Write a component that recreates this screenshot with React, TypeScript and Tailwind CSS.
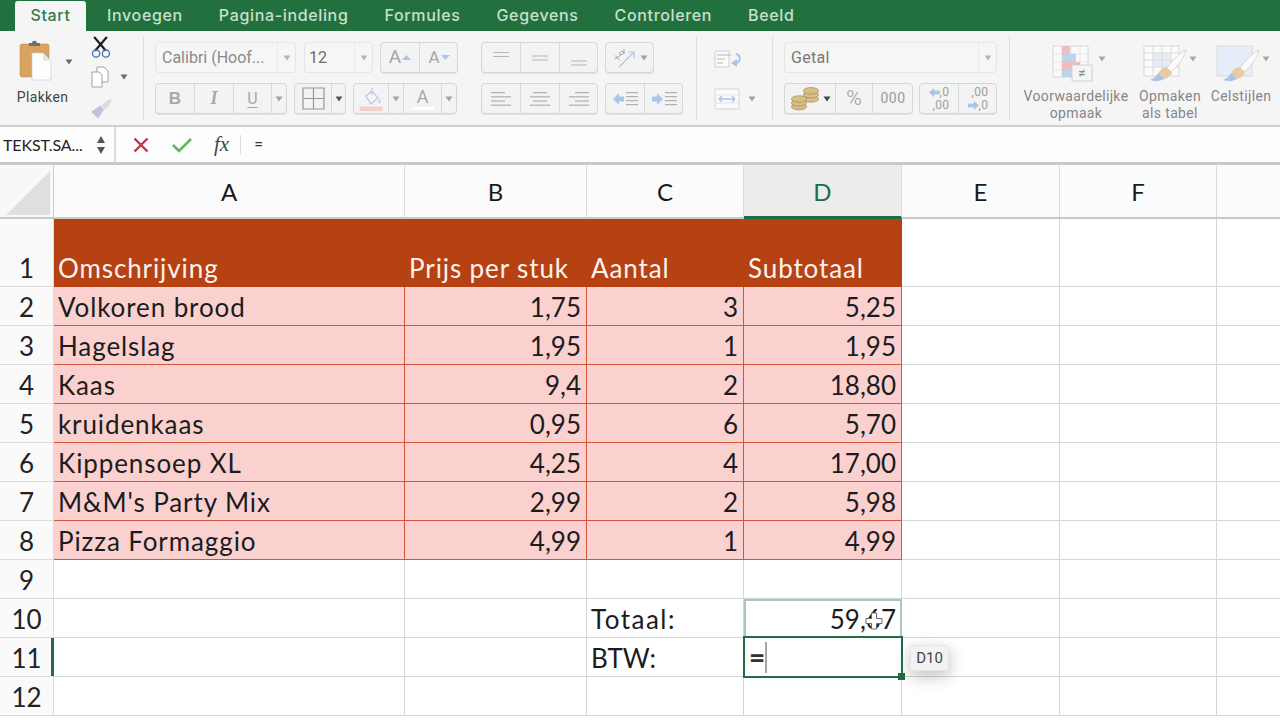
import React from "react";

const ui = "font-['Roboto','Liberation_Sans',sans-serif]";
const sheet = "font-['Lato','Carlito',sans-serif]";

function Caret({ className = "", color = "#a3a3a3" }: { className?: string; color?: string }) {
  return (
    <svg width="8" height="6" viewBox="0 0 8 6" className={className}>
      <path d="M0.5 0.5h7L4 5.5z" fill={color} />
    </svg>
  );
}

function Btn({ w, children, className = "" }: { w: string; children?: React.ReactNode; className?: string }) {
  return <div className={`flex h-full shrink-0 items-center justify-center border-r border-[#d9d9d9] last:border-r-0 ${w} ${className}`}>{children}</div>;
}

function Box({ w, children, className = "" }: { w: string; children: React.ReactNode; className?: string }) {
  return <div className={`flex h-[31px] shrink-0 items-center rounded-[4px] border border-[#d6d6d6] bg-[#f3f3f3] shadow-[0_1px_0_#e2e2e2] ${w} ${className}`}>{children}</div>;
}

function Select({ w, text, color, extra = "" }: { w: string; text: string; color: string; extra?: string }) {
  return (
    <div className={`flex h-[31px] shrink-0 items-center rounded-[4px] border border-[#e6e6e6] bg-[#f6f6f6] pl-[6px] ${w}`}>
      <span className={`flex-1 text-[16px] text-[#777] ${extra}`} style={{ color }}>{text}</span>
      <div className="flex h-full w-[18px] items-center justify-center border-l border-[#ececec]">
        <Caret color="#b5b5b5" />
      </div>
    </div>
  );
}

function Lines({ kind }: { kind: "l" | "c" | "r" }) {
  const rows: [number, number][] =
    kind === "l" ? [[0, 14], [0, 20], [0, 14], [0, 20]] : kind === "c" ? [[3, 14], [0, 20], [3, 14], [0, 20]] : [[6, 14], [0, 20], [6, 14], [0, 20]];
  return (
    <svg width="20" height="16" viewBox="0 0 20 16">
      {rows.map(([x, w], i) => (
        <rect key={i} x={x} y={1 + i * 4.2} width={w} height="1.2" fill="#b0b0b0" />
      ))}
    </svg>
  );
}

function Indent({ right }: { right?: boolean }) {
  return (
    <svg width="26" height="16" viewBox="0 0 26 16">
      {right ? <path d="M1 5.500h5V2l6 6-6 6v-3.500H1z" fill="#a9c6ea" /> : <path d="M12 5.500H7V2L1 8l6 6v-3.500h5z" fill="#a9c6ea" />}
      {[1, 5, 9, 13].map((y) => (
        <rect key={y} x="14" y={y} width="12" height="1.200" fill="#b0b0b0" />
      ))}
    </svg>
  );
}

function Brush() {
  return (
    <g>
      <path d="M43 5C36 8 30 15 24 23l4 4C35 21 41 13 43 5z" fill="#fbfbfb" stroke="#cdcdcd" strokeWidth="0.800" />
      <path d="M23 22c-4 1-7 4-8 7l6 5c4-1 7-4 8-7z" fill="#e6cba3" />
      <path d="M15 28c-1 3-4 5-8 7 5 2 11 1 14-1z" fill="#a9c4ea" />
    </g>
  );
}

function TableGrid({ fill }: { fill?: boolean }) {
  return (
    <g stroke="#dadada" strokeWidth="1" fill="none">
      <rect x="1" y="1" width="35" height="30" fill={fill ? "#e7edf8" : "#fbfbfb"} />
      {!fill && <rect x="10" y="8" width="18" height="14" fill="#e7edf8" stroke="none" />}
      {!fill && <path d="M1 8h35M1 15h35M1 22h35M10 1v30M19 1v30M28 1v30" />}
    </g>
  );
}

function Separator() {
  return <div className="h-[84px] w-px shrink-0 self-start bg-[#dfdfdf]" />;
}

function Ribbon() {
  return (
    <div className={`flex h-[96px] shrink-0 items-start border-b-2 border-[#cfcfcf] bg-[#f5f5f5] pt-[5px] ${ui}`}>
      {/* Clipboard */}
      <div className="flex h-[84px] w-[143px] shrink-0">
        <div className="ml-4 flex w-[53px] flex-col items-center">
          <svg width="34" height="42" viewBox="0 0 34 42" className="ml-[-14px] mt-[4px]">
            <rect x="1" y="4" width="29" height="33" rx="2" fill="#d9a25f" stroke="#b98a4e" strokeWidth="0.500" />
            <path d="M10 6V3h3c0-3 5-3 5 0h3v3z" fill="#6f6f6f" />
            <path d="M13 13h11l8 8v19H13z" fill="#fdfdfd" stroke="#cfcfcf" strokeWidth="0.700" />
            <path d="M24 13v8h8z" fill="#e6e6e6" />
          </svg>
          <span className="mt-[5px] text-[14px] leading-5 tracking-[0.35px] text-[#444]">Plakken</span>
        </div>
        <Caret color="#6b6b6b" className="ml-[-4px] mt-[23px]" />
        <div className="ml-[17px] flex w-[40px] flex-col">
          <svg width="22" height="24" viewBox="0 0 22 24" className="mt-0">
            <path d="M4 1l12 14M17 1L5 15" stroke="#1c1c1c" strokeWidth="2.200" />
            <circle cx="6" cy="18" r="3.700" fill="none" stroke="#3f72b5" strokeWidth="1.300" />
            <circle cx="16" cy="18" r="3.700" fill="none" stroke="#3f72b5" strokeWidth="1.300" />
          </svg>
          <div className="mt-[7px] flex items-center">
            <svg width="20" height="22" viewBox="0 0 20 22">
              <path d="M7 1h7l4 4v11H7z" fill="#fff" stroke="#9a9a9a" strokeWidth="0.900" />
              <path d="M2 6h7l3 3v12H2z" fill="#fff" stroke="#9a9a9a" strokeWidth="0.900" />
            </svg>
            <Caret color="#6b6b6b" className="ml-[10px]" />
          </div>
          <svg width="24" height="22" viewBox="0 0 24 22" className="mt-[10px]">
            <path d="M22 1c-3 0-8 4-11 7l4 4c3-3 7-7 7-11z" fill="#dcdcdc" />
            <path d="M10 8L1 14l7 7 6-9z" fill="#b9c4d4" />
          </svg>
        </div>
      </div>
      <Separator />
      {/* Font */}
      <div className="ml-[11px] flex w-[303px] shrink-0 flex-col gap-[10px] pt-[6px]">
        <div className="flex gap-[8px]">
          <Select w="w-[141px]" text="Calibri (Hoof..." color="#8a8a8a" />
          <Select w="w-[69px]" text="12" color="#6e6e6e" extra="ml-[-2px]" />
          <Box w="w-[78px]" className="ml-[-1px]">
            <Btn w="w-[39px]" className="gap-[1px]">
              <span className="text-[19px] text-[#a6a6a6]">A</span>
              <svg width="9" height="5" viewBox="0 0 9 5"><path d="M0 5h9L4.500 0z" fill="#a9c6ea" /></svg>
            </Btn>
            <Btn w="w-[38px]" className="gap-[1px]">
              <span className="text-[17px] text-[#a6a6a6]">A</span>
              <svg width="9" height="5" viewBox="0 0 9 5"><path d="M0 0h9L4.500 5z" fill="#a9c6ea" /></svg>
            </Btn>
          </Box>
        </div>
        <div className="flex gap-[7px]">
          <Box w="w-[132px]">
            <Btn w="w-[39px]"><span className="font-['Liberation_Sans',sans-serif] text-[17px] font-bold text-[#a8a8a8]">B</span></Btn>
            <Btn w="w-[39px]"><span className="font-['Liberation_Serif',serif] text-[18px] italic font-bold text-[#a8a8a8]">I</span></Btn>
            <Btn w="w-[38px]"><span className="text-[16px] underline underline-offset-[3px] text-[#a8a8a8]">U</span></Btn>
            <Btn w="w-[14px]"><Caret /></Btn>
          </Box>
          <Box w="w-[52px]">
            <Btn w="w-[37px]">
              <svg width="23" height="23" viewBox="0 0 23 23"><path d="M1 1h21v21H1zM11.500 1v21M1 11.500h21" fill="none" stroke="#979797" strokeWidth="1.200" /></svg>
            </Btn>
            <Btn w="w-[14px]"><Caret color="#555" /></Btn>
          </Box>
          <Box w="w-[104px]">
            <Btn w="w-[35px]">
              <svg width="24" height="24" viewBox="0 0 24 24">
                <path d="M7 9l6-5 6 7-7 6z" fill="#f6f6f6" stroke="#b0c4dc" strokeWidth="1.100" />
                <path d="M13 1v7" stroke="#b0c4dc" />
                <path d="M20 12c1 2 2 3 1 4s-2-1-1-4z" fill="#b0c4dc" />
                <rect x="1" y="20" width="22" height="4" fill="#f8cfcc" stroke="#eebcb8" strokeWidth="0.500" />
              </svg>
            </Btn>
            <Btn w="w-[15px]"><Caret /></Btn>
            <Btn w="w-[38px]" className="flex-col">
              <span className="text-[18px] leading-[19px] text-[#a8a8a8]">A</span>
              <div className="mt-[1px] h-[3px] w-[22px] bg-white" />
            </Btn>
            <Btn w="w-[14px]"><Caret /></Btn>
          </Box>
        </div>
      </div>
      {/* Alignment */}
      <div className="ml-[23px] flex w-[215px] shrink-0 flex-col gap-[10px] pt-[6px]">
        <div className="flex gap-[7px]">
          <Box w="w-[117px]">
            <Btn w="w-[39px]"><svg width="16" height="16" viewBox="0 0 16 16"><path d="M0 2.500h16M0 6.500h16" stroke="#b5b5b5" strokeWidth="1.100" /></svg></Btn>
            <Btn w="w-[39px]"><svg width="16" height="16" viewBox="0 0 16 16"><path d="M0 6h16M0 10h16" stroke="#b5b5b5" strokeWidth="1.100" /></svg></Btn>
            <Btn w="w-[38px]"><svg width="16" height="16" viewBox="0 0 16 16"><path d="M0 11h16M0 15h16" stroke="#b5b5b5" strokeWidth="1.100" /></svg></Btn>
          </Box>
          <Box w="w-[49px]" className="justify-center gap-[3px]">
            <svg width="26" height="24" viewBox="0 0 26 24">
              <path d="M9.500 6.500c1.500-1.500 3.500-1.500 3.500 0s-3 3-4 2-.5-2 .5-2zM13 3l0 5" fill="none" stroke="#a0a0a0" strokeWidth="1" />
              <path d="M3.500 13l6-3.500M4 9.500l5 5" fill="none" stroke="#a0a0a0" strokeWidth="1" />
              <path d="M8 21L22 7M17 6h6v6" fill="none" stroke="#a9c6ea" strokeWidth="1.200" />
            </svg>
            <Caret />
          </Box>
        </div>
        <div className="flex gap-[7px]">
          <Box w="w-[117px]">
            <Btn w="w-[39px]"><Lines kind="l" /></Btn>
            <Btn w="w-[39px]"><Lines kind="c" /></Btn>
            <Btn w="w-[38px]"><Lines kind="r" /></Btn>
          </Box>
          <Box w="w-[78px]">
            <Btn w="w-[39px]"><Indent /></Btn>
            <Btn w="w-[38px]"><Indent right /></Btn>
          </Box>
        </div>
      </div>
      <Separator />
      {/* Wrap / merge */}
      <div className="ml-[17px] flex w-[58px] shrink-0 flex-col pt-[14px]">
        <svg width="28" height="18" viewBox="0 0 28 18">
          <path d="M1 1h14v16H1z" fill="#fafafa" stroke="#cfcfcf" />
          <path d="M3 5h14M3 9h8M3 13h6" stroke="#b8b8b8" />
          <path d="M22 4c5 1 5 8 0 9" fill="none" stroke="#a9c6ea" strokeWidth="2" />
          <path d="M23 9v8l-6-4z" fill="#a9c6ea" />
        </svg>
        <div className="mt-[20px] flex items-center">
          <svg width="26" height="22" viewBox="0 0 26 22">
            <path d="M1 1h24v20H1z" fill="#fafafa" stroke="#d5d5d5" />
            <path d="M1 7h24M1 15h24" stroke="#e4e4e4" />
            <path d="M5 11h16M5 11l3-3M5 11l3 3M21 11l-3-3M21 11l-3 3" stroke="#a9c6ea" strokeWidth="1.400" fill="none" />
          </svg>
          <Caret className="ml-[8px]" />
        </div>
      </div>
      <Separator />
      {/* Number */}
      <div className="ml-[11px] flex w-[225px] shrink-0 flex-col gap-[10px] pt-[6px]">
        <Select w="w-[213px]" text="Getal" color="#777777" extra="tracking-[0.3px]" />
        <div className="flex gap-[6px]">
          <Box w="w-[129px]">
            <Btn w="w-[51px]" className="gap-[3px]">
              <svg width="30" height="24" viewBox="0 0 27 22">
                <g fill="#d9bf83" stroke="#8d7a4c" strokeWidth="0.500">
                  <ellipse cx="19" cy="11" rx="7" ry="3" /><ellipse cx="19" cy="7" rx="7" ry="3" /><ellipse cx="19" cy="3.500" rx="7" ry="3" />
                  <ellipse cx="8" cy="18" rx="7" ry="3" /><ellipse cx="8" cy="14.500" rx="7" ry="3" /><ellipse cx="8" cy="11" rx="7" ry="3" />
                </g>
              </svg>
              <Caret color="#444" />
            </Btn>
            <Btn w="w-[37px]"><span className="text-[21px] font-light text-[#9a9a9a]">%</span></Btn>
            <Btn w="w-[40px]"><span className="text-[14px] tracking-[0.4px] text-[#9a9a9a]">000</span></Btn>
          </Box>
          <Box w="w-[78px]">
            <Btn w="w-[39px]">
              <div className="flex flex-col items-end text-[12px] leading-[13px] tracking-[0.4px] text-[#a0a0a0]">
                <span className="flex items-center"><svg width="11" height="9" viewBox="0 0 11 9"><path d="M0 4.500L5 0v2.500h6v4H5V9z" fill="#a9c6ea" /></svg>,0</span>
                <span>,00</span>
              </div>
            </Btn>
            <Btn w="w-[38px]">
              <div className="flex flex-col items-end text-[12px] leading-[13px] tracking-[0.4px] text-[#a0a0a0]">
                <span>,00</span>
                <span className="flex items-center"><svg width="11" height="9" viewBox="0 0 11 9"><path d="M11 4.500L6 0v2.500H0v4h6V9z" fill="#a9c6ea" /></svg>,0</span>
              </div>
            </Btn>
          </Box>
        </div>
      </div>
      <Separator />
      {/* Styles */}
      <div className="flex shrink-0 text-center text-[14px] leading-[16.500px] tracking-[0.35px] text-[#868686]">
        <div className="ml-[12px] flex w-[108px] flex-col items-center">
          <div className="flex h-[52px] items-start pt-[9px]">
            <svg width="42" height="37" viewBox="0 0 42 37" className="ml-[6px]">
              <path d="M1 1h35v31H1z" fill="#fafafa" stroke="#d8d8d8" />
              <path d="M1 9h35M1 17h35M1 25h35M10 1v31M19 1v31M28 1v31" stroke="#e3e3e3" />
              <rect x="10" y="1" width="8" height="8" fill="#f0bcc0" />
              <rect x="10" y="9" width="14" height="8" fill="#bcd3ec" />
              <rect x="10" y="17" width="18" height="8" fill="#f0bcc0" />
              <rect x="10" y="25" width="10" height="7" fill="#bcd3ec" />
              <rect x="20" y="20" width="20" height="16" fill="#f5f5f5" stroke="#cfcfcf" />
              <text x="30" y="33" fontSize="14" textAnchor="middle" fill="#8a8a8a" fontFamily="Roboto">≠</text>
            </svg>
            <Caret className="ml-[4px] mt-[11px]" color="#a8a8a8" />
          </div>
          <span>Voorwaardelijke<br />opmaak</span>
        </div>
        <div className="ml-[7px] flex w-[66px] flex-col items-center">
          <div className="flex h-[52px] items-start pt-[9px]">
            <svg width="44" height="37" viewBox="0 0 44 37"><TableGrid /><Brush /></svg>
            <Caret className="ml-[2px] mt-[11px]" color="#a8a8a8" />
          </div>
          <span>Opmaken<br />als tabel</span>
        </div>
        <div className="ml-[6px] flex w-[64px] flex-col items-center">
          <div className="flex h-[52px] items-start pt-[9px]">
            <svg width="44" height="37" viewBox="0 0 44 37" className="ml-[4px]"><TableGrid fill /><Brush /></svg>
            <Caret className="ml-[2px] mt-[11px]" color="#a8a8a8" />
          </div>
          <span>Celstijlen</span>
        </div>
      </div>
    </div>
  );
}

function FormulaBar() {
  return (
    <div className="flex h-[38px] shrink-0 items-center border-b-[3px] border-[#c9c9c9] bg-[#fdfdfd]">
      <div className="flex h-full w-[116px] shrink-0 items-center border-r-2 border-[#dcdcdc] pl-[3px]">
        <span className={`text-[16px] tracking-[-0.1px] text-[#222] ${sheet}`}>TEKST.SA...</span>
        <svg width="10" height="20" viewBox="0 0 10 20" className="ml-auto mr-[8px]">
          <path d="M1 8l4-7 4 7zM1 12l4 7 4-7z" fill="#555" />
        </svg>
      </div>
      <svg width="16" height="16" viewBox="0 0 16 16" className="ml-[17px]">
        <path d="M1.500 1.500l13 13M14.500 1.500l-13 13" stroke="#c5334a" strokeWidth="2.400" />
      </svg>
      <svg width="20" height="16" viewBox="0 0 20 16" className="ml-[23px]">
        <path d="M1 8l6 6L19 2" fill="none" stroke="#5cb85c" strokeWidth="2.600" />
      </svg>
      <span className="ml-[22px] font-['Liberation_Serif',serif] text-[21px] italic leading-none text-[#444]">fx</span>
      <div className="ml-[11px] h-[20px] w-px bg-[#dcdcdc]" />
      <span className={`ml-[13px] text-[16px] text-[#333] ${ui}`}>=</span>
    </div>
  );
}

const cols = ["A", "B", "C", "D", "E", "F"];
const colWidths = ["w-[351px]", "w-[182px]", "w-[157px]", "w-[158px]", "w-[158px]", "w-[157px]"];
const gWidth = "w-[64px]";

const data: [string, string, string, string][] = [
  ["Volkoren brood", "1,75", "3", "5,25"],
  ["Hagelslag", "1,95", "1", "1,95"],
  ["Kaas", "9,4", "2", "18,80"],
  ["kruidenkaas", "0,95", "6", "5,70"],
  ["Kippensoep XL", "4,25", "4", "17,00"],
  ["M&M's Party Mix", "2,99", "2", "5,98"],
  ["Pizza Formaggio", "4,99", "1", "4,99"],
];

const gridCell = "flex shrink-0 items-center border-r border-b border-[#d6d6d6] px-[4px]";
const bandCell = "flex shrink-0 items-center border-r border-b border-[#d4553d] bg-[#fad1cf] pl-[4px] pr-[5px] pt-[1px] text-[#1c1c1c]";

function RowHead({ n, active, h = "h-[39px]" }: { n: number; active?: boolean; h?: string }) {
  return (
    <div className={`relative flex w-[54px] shrink-0 items-end justify-center border-r border-b border-[#dcdcdc] bg-[#fafafa] pb-[5px] text-[#222] ${h}`}>
      {n}
      {active && <div className="absolute right-[-1px] top-0 h-full w-[3px] bg-[#1f6e43]" />}
    </div>
  );
}

function Empty({ w }: { w: string }) {
  return <div className={`${gridCell} ${w} h-[39px]`} />;
}

function Sheet() {
  return (
    <div className={`flex-1 overflow-hidden bg-white text-[26px] leading-none ${sheet}`}>
      <div className="flex h-[54px] w-[1340px] border-b-2 border-[#c9c9c9] bg-[#fbfbfb] text-[24px]">
        <div className="flex w-[54px] shrink-0 items-end justify-end border-r border-[#cfcfcf] bg-[#f8f8f8] pb-[2px] pr-[3px]">
          <svg width="44" height="44" viewBox="0 0 46 46"><path d="M46 0v46H0z" fill="#dfdfdf" /></svg>
        </div>
        {cols.map((c, i) => (
          <div
            key={c}
            className={`flex shrink-0 items-center justify-center border-r border-[#dcdcdc] pt-[2px] ${colWidths[i]} ${c === "D" ? "mb-[-2px] border-b-[3px] border-b-[#1f6e43] bg-[#ececec] text-[#1f6e43]" : "text-[#1a1a1a]"}`}
          >
            {c}
          </div>
        ))}
        <div className="w-[64px] shrink-0" />
      </div>

      <div className="flex h-[68px] w-[1340px]">
        <RowHead n={1} h="h-[68px]" />
        {["Omschrijving", "Prijs per stuk", "Aantal", "Subtotaal"].map((t, i) => (
          <div key={t} className={`flex h-[68px] shrink-0 items-end bg-[#b64113] pb-[6px] pl-[4px] tracking-[0.9px] text-[#fdf3ee] ${colWidths[i]}`}>
            {t}
          </div>
        ))}
        <Empty w={`${colWidths[4]} !h-[68px]`} />
        <Empty w={`${colWidths[5]} !h-[68px]`} />
        <Empty w={`${gWidth} !h-[68px]`} />
      </div>

      {data.map((r, i) => (
        <div key={r[0]} className="flex h-[39px] w-[1340px]">
          <RowHead n={i + 2} />
          <div className={`${bandCell} ${colWidths[0]} h-[39px] tracking-[0.9px]`}>{r[0]}</div>
          <div className={`${bandCell} ${colWidths[1]} h-[39px] justify-end`}>{r[1]}</div>
          <div className={`${bandCell} ${colWidths[2]} h-[39px] justify-end`}>{r[2]}</div>
          <div className={`${bandCell} ${colWidths[3]} h-[39px] justify-end`}>{r[3]}</div>
          <Empty w={colWidths[4]} />
          <Empty w={colWidths[5]} />
          <Empty w={gWidth} />
        </div>
      ))}

      <div className="flex h-[39px] w-[1340px]">
        <RowHead n={9} />
        {cols.map((c, i) => <Empty key={c} w={colWidths[i]} />)}
        <Empty w={gWidth} />
      </div>

      <div className="flex h-[39px] w-[1340px] text-[#1c1c1c]">
        <RowHead n={10} />
        <Empty w={colWidths[0]} />
        <Empty w={colWidths[1]} />
        <div className={`${gridCell} ${colWidths[2]} h-[39px] pt-[1px] tracking-[1.500px]`}>Totaal:</div>
        <div className={`relative flex shrink-0 items-center justify-end border-2 border-[#a9c9b4] px-[4px] ${colWidths[3]} h-[39px]`}>
          59,67
          <svg width="18" height="18" viewBox="0 0 18 18" className="absolute right-[17px] top-[11px]">
            <path d="M6.500 1h5v5.500H17v5h-5.500V17h-5v-5.500H1v-5h5.500z" fill="#ffffff" stroke="#666" strokeWidth="1" />
          </svg>
        </div>
        <Empty w={colWidths[4]} />
        <Empty w={colWidths[5]} />
        <Empty w={gWidth} />
      </div>

      <div className="flex h-[39px] w-[1340px] text-[#1c1c1c]">
        <RowHead n={11} active />
        <Empty w={colWidths[0]} />
        <Empty w={colWidths[1]} />
        <div className={`${gridCell} ${colWidths[2]} h-[39px] pt-[1px]`}>BTW:</div>
        <div className="relative z-10 mx-[-1px] mt-[-2px] flex h-[42px] w-[160px] shrink-0 items-center border-2 border-[#1f6e43] bg-white pl-[4px]">
          <span className="text-[28px] font-bold text-[#333]">=</span>
          <div className="h-[31px] w-[2px] bg-[#a5a5a5]" />
          <div className="absolute bottom-[-4px] right-[-4px] h-[7px] w-[7px] bg-[#1f6e43]" />
          <div className={`absolute left-[165px] top-[7px] flex h-[26px] w-[39px] items-center justify-center rounded-[3px] border border-[#e6e6e6] bg-[#f2f2f2] text-[15px] text-[#444] shadow-[0_5px_16px_rgba(0,0,0,0.25)] ${ui}`}>
            D10
          </div>
        </div>
        <Empty w={colWidths[4]} />
        <Empty w={colWidths[5]} />
        <Empty w={gWidth} />
      </div>

      <div className="flex h-[39px] w-[1340px]">
        <RowHead n={12} />
        {cols.map((c, i) => <Empty key={c} w={colWidths[i]} />)}
        <Empty w={gWidth} />
      </div>
    </div>
  );
}

export default function App() {
  const tabs = ["Invoegen", "Pagina-indeling", "Formules", "Gegevens", "Controleren", "Beeld"];
  return (
    <div className="flex h-[720px] w-[1280px] flex-col overflow-hidden bg-white">
      <div className="flex h-[31px] shrink-0 items-end bg-[#23703f] pl-[15px] font-['Inter','Roboto',sans-serif] text-[16px] font-medium tracking-[0.65px]">
        <div className="flex h-[30px] w-[71px] items-center justify-center rounded-t-[3px] bg-[#f5f5f5] pb-[2px] text-[#2f7d4f]">Start</div>
        <div className="ml-[21px] flex h-[30px] items-center gap-[36px] pb-[2px] text-[#c6e0cd]">
          {tabs.map((t) => <span key={t}>{t}</span>)}
        </div>
      </div>
      <Ribbon />
      <FormulaBar />
      <Sheet />
    </div>
  );
}
